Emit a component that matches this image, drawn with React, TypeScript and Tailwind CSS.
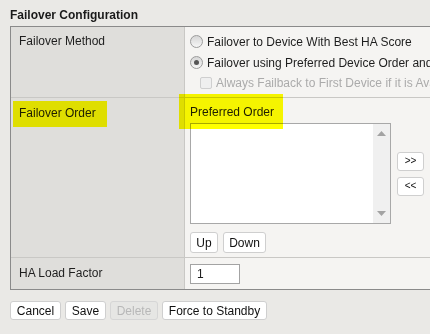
import React from "react";

const font = { fontFamily: '"Liberation Sans", Arial, sans-serif' };

function Radio({ checked }: { checked?: boolean }) {
  return (
    <span className="relative inline-flex h-[13px] w-[13px] shrink-0 items-center justify-center rounded-full border border-[#9c9c9c] bg-gradient-to-b from-[#d6d6d6] to-[#f6f6f6]">
      {checked && <span className="h-[5px] w-[5px] rounded-full bg-[#555]" />}
    </span>
  );
}

function Btn({ children, disabled, className = "" }: { children: React.ReactNode; disabled?: boolean; className?: string }) {
  return (
    <div
      className={
        "flex items-center justify-center whitespace-nowrap rounded-[3px] border text-[12px] leading-none " +
        (disabled
          ? "border-[#d6d6d6] bg-[#e6e6e4] text-[#b8b8b8] "
          : "border-[#cfcfcf] bg-white text-[#111] ") +
        className
      }
    >
      {children}
    </div>
  );
}

export default function App() {
  return (
    <div className="relative h-[334px] w-[430px] overflow-hidden bg-[#eae9e6] text-[12px] text-[#1e1e1e]" style={font}>
      <div className="pl-[10px] pt-[7px] text-[12px] font-bold leading-4 text-[#1a1a1a]">Failover Configuration</div>
      <div className="ml-[10px] mt-[3px] w-[480px] border-b border-l border-t border-[#8a8a8a]">
        {/* Row 1 */}
        <div className="flex h-[71px] border-b border-[#c9c8c5]">
          <div className="w-[174px] shrink-0 border-r border-[#c9c8c5] bg-[#dfdedb] pl-2 pt-1 leading-[21px]">Failover Method</div>
          <div className="flex-1 bg-[#f5f4f2] pl-[5px] pt-1">
            <div className="flex h-[21px] items-center gap-[4px] whitespace-nowrap">
              <Radio />
              <span>Failover to Device With Best HA Score</span>
            </div>
            <div className="flex h-[21px] items-center gap-[4px] whitespace-nowrap">
              <Radio checked />
              <span>Failover using Preferred Device Order and Load Factor</span>
            </div>
            <div className="flex h-[20px] items-center gap-[4px] whitespace-nowrap pl-[10px]">
              <span className="h-[12px] w-[12px] shrink-0 rounded-[2px] border border-[#cfcfcf] bg-[#efefef]" />
              <span className="text-[#ababab]">Always Failback to First Device if it is Available</span>
            </div>
          </div>
        </div>
        {/* Row 2 */}
        <div className="flex h-[160px] border-b border-[#c9c8c5]">
          <div className="w-[174px] shrink-0 border-r border-[#c9c8c5] bg-[#dfdedb] pl-2 pt-[5px] leading-[20px]">Failover Order</div>
          <div className="flex-1 bg-[#f5f4f2] pl-[5px] pt-1">
            <div className="h-5 leading-5">Preferred Order</div>
            <div className="mt-[1px] flex items-center gap-[6px]">
              <div className="flex h-[101px] w-[201px] border border-[#a8a8a8] bg-white">
                <div className="flex-1" />
                <div className="flex w-[17px] flex-col items-center justify-between bg-[#f0f0f0] py-[7px]">
                  <svg width="9" height="5" viewBox="0 0 9 5"><path d="M0 5 L4.5 0 L9 5 Z" fill="#a3a3a3" /></svg>
                  <svg width="9" height="5" viewBox="0 0 9 5"><path d="M0 0 L4.5 5 L9 0 Z" fill="#a3a3a3" /></svg>
                </div>
              </div>
              <div className="flex flex-col gap-[6px]">
                <Btn className="h-[19px] w-[27px] !text-[10px]">&gt;&gt;</Btn>
                <Btn className="h-[19px] w-[27px] !text-[10px]">&lt;&lt;</Btn>
              </div>
            </div>
            <div className="mt-[8px] flex gap-[5px]">
              <Btn className="h-[21px] w-[28px]">Up</Btn>
              <Btn className="h-[21px] w-[43px]">Down</Btn>
            </div>
          </div>
        </div>
        {/* Row 3 */}
        <div className="flex h-[31px]">
          <div className="w-[174px] shrink-0 border-r border-[#c9c8c5] bg-[#dfdedb] pl-2 pt-[5px] leading-[20px]">HA Load Factor</div>
          <div className="flex-1 bg-[#f5f4f2] pl-[5px] pt-[6px]">
            <div className="flex h-[20px] w-[50px] items-center border border-[#a3a3a3] bg-white pl-[6px]">1</div>
          </div>
        </div>
      </div>
      <div className="ml-[10px] mt-[11px] flex gap-[4px]">
        <Btn className="h-[19px] w-[51px]">Cancel</Btn>
        <Btn className="h-[19px] w-[41px]">Save</Btn>
        <Btn disabled className="h-[19px] w-[48px]">Delete</Btn>
        <Btn className="h-[19px] w-[105px]">Force to Standby</Btn>
      </div>
      {/* highlighter overlays */}
      <div className="pointer-events-none absolute left-[13px] top-[101px] h-[26px] w-[94px] bg-[#ffff00] mix-blend-multiply" />
      <div className="pointer-events-none absolute left-[179px] top-[94px] h-[35px] w-[104px] bg-[#ffff00] mix-blend-multiply" />
    </div>
  );
}
